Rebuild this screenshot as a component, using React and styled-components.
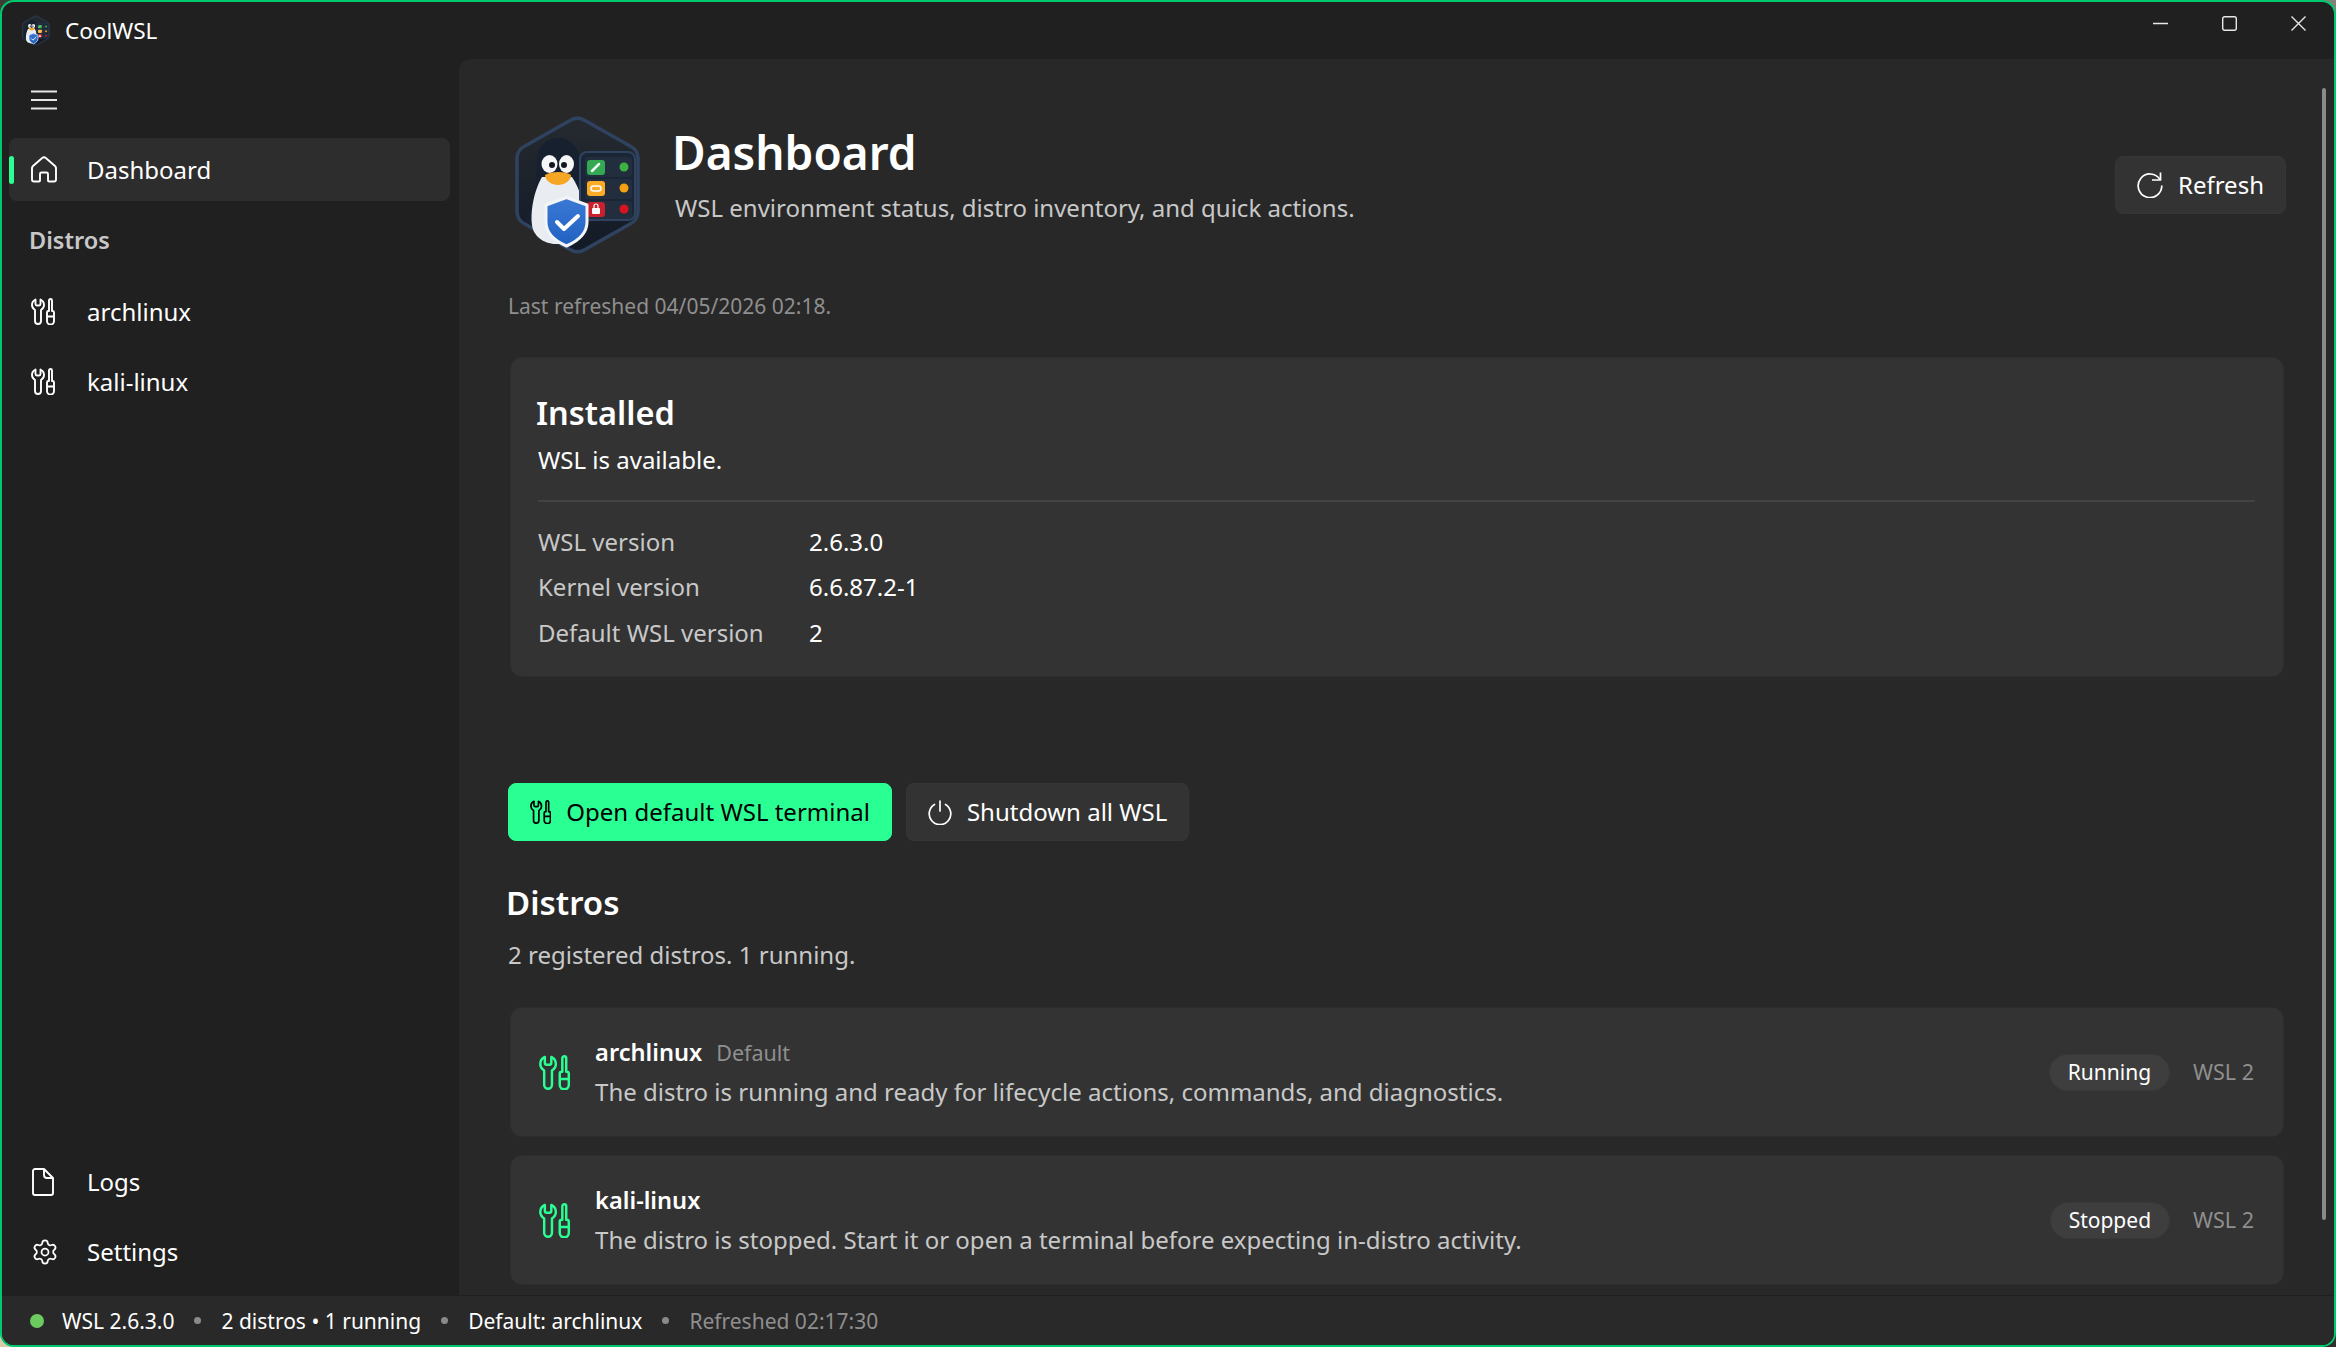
import React from 'react';
import styled, { createGlobalStyle } from 'styled-components';
import { Settings as GearIcon } from 'lucide-react';

const GlobalStyle = createGlobalStyle`
  html, body {
    margin: 0;
    padding: 0;
    height: 100%;
    overflow: hidden;
    background: linear-gradient(135deg, #3d3d38 0%, #e4dbb4 40%, #8a8a80 60%, #2e2e2e 100%);
  }
  * { box-sizing: border-box; }
`;

const Window = styled.div`
  width: 100vw;
  height: 100vh;
  display: flex;
  flex-direction: column;
  border: 2px solid #00c86e;
  border-radius: 14px;
  background: #202020;
  overflow: hidden;
  color: #fff;
  font-family: "Noto Sans", "Open Sans", sans-serif;
  font-size: 24px;
  line-height: 28px;
`;

const TitleBar = styled.header`
  height: 57px;
  flex: none;
  display: flex;
  align-items: center;
  padding: 0 28px 0 20px;
`;

const AppName = styled.span`
  margin-left: 15px;
  font-size: 22.5px;
`;

const WindowControls = styled.div`
  margin-left: auto;
  align-self: flex-start;
  margin-top: 14px;
  display: flex;
  gap: 54px;
  align-items: center;
`;

const Body = styled.div`
  flex: 1;
  min-height: 0;
  display: flex;
`;

const Sidebar = styled.aside`
  width: 457px;
  flex: none;
  display: flex;
  flex-direction: column;
  padding: 0 9px 11px 7px;
`;

const MenuButton = styled.div`
  height: 22px;
  margin: 30px 0 27px 22px;
  display: flex;
  align-items: center;
`;

const NavItem = styled.div`
  position: relative;
  height: 63px;
  flex: none;
  display: flex;
  align-items: center;
  padding-left: 22px;
  border-radius: 8px;
  background: ${(p) => (p.$active ? '#2d2d2d' : 'transparent')};
  margin-bottom: ${(p) => p.$gap || 7}px;
`;

const ActiveBar = styled.span`
  position: absolute;
  left: 0;
  top: 18px;
  width: 5px;
  height: 28px;
  border-radius: 3px;
  background: #2aff94;
`;

const NavIconSlot = styled.span`
  width: 56px;
  flex: none;
  display: flex;
  align-items: center;
`;

const NavGroupTitle = styled.div`
  height: 28px;
  margin: 18px 0 26px 20px;
  font-weight: 600;
  color: #c8c8c8;
  font-size: 23.5px;
`;

const SidebarFooter = styled.div`
  margin-top: auto;
`;

const Main = styled.main`
  flex: 1;
  min-width: 0;
  position: relative;
  background: #282828;
  border-top-left-radius: 12px;
  padding: 55px 48px 0 49px;
  overflow: hidden;
`;

const ScrollThumb = styled.div`
  position: absolute;
  top: 29px;
  right: 8px;
  width: 4px;
  height: 1132px;
  border-radius: 2px;
  background: #8a8a8a;
`;

const PageHeader = styled.section`
  display: flex;
  align-items: center;
  padding-left: 6px;
`;

const HeaderText = styled.div`
  flex: 1;
  margin-left: 30px;
  align-self: flex-start;
  padding-top: 10px;
`;

const PageTitle = styled.h1`
  margin: 0;
  font-size: 46px;
  line-height: 56px;
  font-weight: 600;
`;

const PageSubtitle = styled.p`
  margin: 14px 0 0 3px;
  color: #c8c8c8;
`;

const LastRefreshed = styled.p`
  margin: 38px 0 39px;
  font-size: 21px;
  line-height: 24px;
  color: #8f8f8f;
`;

const Button = styled.button`
  height: 58px;
  display: inline-flex;
  align-items: center;
  gap: 15px;
  padding: 0 21px;
  border: 1px solid ${(p) => (p.$accent ? '#2aff94' : '#363636')};
  border-radius: 8px;
  background: ${(p) => (p.$accent ? '#2aff94' : '#333333')};
  color: ${(p) => (p.$accent ? '#000000' : '#ffffff')};
  font: inherit;
`;

const Card = styled.section`
  margin: 0 2px;
  background: #333333;
  border: 1px solid #2e2e2e;
  border-radius: 12px;
`;

const StatusCard = styled(Card)`
  height: 320px;
  padding: 35px 28px 0 25px;
`;

const SectionTitle = styled.h2`
  margin: 0;
  font-size: 32.5px;
  line-height: 40px;
  font-weight: 600;
`;

const StatusText = styled.p`
  margin: 13px 0 0 2px;
`;

const Divider = styled.hr`
  margin: 26px 0 17px 2px;
  border: 0;
  height: 2px;
  background: #434343;
`;

const InfoGrid = styled.dl`
  margin: 0 0 0 2px;
  display: grid;
  grid-template-columns: 271px 1fr;
  grid-auto-rows: 45.5px;
  align-items: center;
`;

const InfoLabel = styled.dt`
  color: #c8c8c8;
`;

const InfoValue = styled.dd`
  margin: 0;
`;

const ActionRow = styled.div`
  margin-top: 106px;
  display: flex;
  gap: 14px;
`;

const DistrosTitle = styled(SectionTitle)`
  margin: 42px 0 0 -2px;
  font-size: 33px;
`;

const DistrosSummary = styled.p`
  margin: 18px 0 38px;
  color: #c8c8c8;
`;

const DistroList = styled.div`
  display: flex;
  flex-direction: column;
  gap: 18px;
`;

const DistroCard = styled(Card)`
  height: 130px;
  display: flex;
  align-items: center;
  padding: 0 29px 0 28px;
  color: #2aff94;
`;

const DistroInfo = styled.div`
  flex: 1;
  margin-left: 25px;
`;

const DistroHead = styled.div`
  display: flex;
  align-items: baseline;
  gap: 14px;
  height: 30px;
  margin-bottom: 10px;
  color: #fff;
`;

const DistroName = styled.strong`
  font-weight: 600;
  font-size: 23.6px;
`;

const DefaultTag = styled.span`
  font-size: 21.5px;
  color: #8f8f8f;
`;

const DistroText = styled.p`
  margin: 0;
  color: #c8c8c8;
`;

const Chip = styled.span`
  height: 37px;
  display: flex;
  align-items: center;
  padding: 0 18px;
  border: 1px solid #393939;
  border-radius: 19px;
  background: #3e3e3e;
  color: #fff;
  font-size: 21px;
`;

const WslTag = styled.span`
  margin-left: 23px;
  font-size: 21.5px;
  color: #8f8f8f;
`;

const StatusBar = styled.footer`
  height: 50px;
  flex: none;
  display: flex;
  align-items: center;
  padding-left: 28px;
  background: #292929;
  border-top: 1px solid #1f1f1f;
  font-size: 21px;
`;

const StatusDot = styled.span`
  width: 14px;
  height: 14px;
  margin-right: 18px;
  border-radius: 50%;
  background: #6ccb5f;
`;

const StatusSep = styled.span`
  width: 7px;
  height: 7px;
  margin: 0 20px;
  border-radius: 50%;
  background: #8a8a8a;
`;

const StatusMuted = styled.span`
  color: #8f8f8f;
`;

const ToolsIcon = ({ size = 27 }) => (
  <svg width={(size * 24) / 27} height={size} viewBox="0 0 24 27" fill="none" stroke="currentColor" strokeWidth="1.9" strokeLinejoin="round">
    <path d="M4.5 1.5C2.5 2.5 1 4.5 1 7c0 2.5 1.5 4 3 5v11a3 3 0 0 0 6 0V12c1.500-1 3-2.500 3-5 0-2.500-1.500-4.500-3.500-5.500V6A1.500 1.500 0 0 1 8 7.500H6A1.500 1.500 0 0 1 4.500 6Z" />
    <path d="M18 2.500a1.500 1.500 0 0 1 3 0V13h.5a1.500 1.500 0 0 1 1.500 1.500V23a3.500 3.500 0 0 1-7 0v-8.500a1.500 1.500 0 0 1 1.500-1.500H18ZM16 18.500h7" />
  </svg>
);

const HomeIcon = () => (
  <svg width="26" height="27" viewBox="0 0 26 27" fill="none" stroke="currentColor" strokeWidth="1.9">
    <path d="M11.200 2 2 10a3 3 0 0 0-1 2.300V23.500a2 2 0 0 0 2 2h5a1 1 0 0 0 1-1V18a1.500 1.500 0 0 1 1.500-1.500h5A1.500 1.500 0 0 1 17 18v6.500a1 1 0 0 0 1 1h5a2 2 0 0 0 2-2V12.300a3 3 0 0 0-1-2.300L14.800 2a2.700 2.700 0 0 0-3.600 0Z" />
  </svg>
);

const MenuIcon = () => (
  <svg width="26" height="20" viewBox="0 0 26 20" stroke="#e6e6e6" strokeWidth="1.8">
    <path d="M0 1.500h26M0 10h26M0 18.500h26" />
  </svg>
);

const FileIcon = () => (
  <svg width="24" height="28" viewBox="0 0 24 28" fill="none" stroke="currentColor" strokeWidth="1.9" strokeLinejoin="round">
    <path d="M4 1h9l9 9v15a2 2 0 0 1-2 2H4a2 2 0 0 1-2-2V3a2 2 0 0 1 2-2Z" />
    <path d="M13 1v6a3 3 0 0 0 3 3h6" />
  </svg>
);

const RefreshIcon = () => (
  <svg width="26" height="26" viewBox="0 0 26 26" fill="none" stroke="currentColor" strokeWidth="1.7">
    <path d="M23 7.500A11.800 11.800 0 1 0 24.800 13.500" />
    <path d="M23.500 0.500V8H15" />
  </svg>
);

const PowerIcon = () => (
  <svg width="24" height="25" viewBox="0 0 24 25" fill="none" stroke="currentColor" strokeWidth="1.7" strokeLinecap="round">
    <path d="M12 1v10M6.500 4.500a10.800 10.800 0 1 0 11 0" />
  </svg>
);

const MinimizeIcon = () => (
  <svg width="15" height="15" viewBox="0 0 15 15" stroke="#e8e8e8" strokeWidth="1.400">
    <path d="M0 7.500h15" />
  </svg>
);

const MaximizeIcon = () => (
  <svg width="15" height="15" viewBox="0 0 15 15" fill="none" stroke="#e8e8e8" strokeWidth="1.400">
    <rect x="0.700" y="0.700" width="13.600" height="13.600" rx="2" />
  </svg>
);

const CloseIcon = () => (
  <svg width="15" height="15" viewBox="0 0 15 15" stroke="#e8e8e8" strokeWidth="1.400">
    <path d="M0.500 0.500l14 14M14.500 0.500l-14 14" />
  </svg>
);

// hand drawn version of the app logo: hexagon, penguin, status panel, shield
const Logo = ({ width = 128 }) => (
  <svg width={width} height={(width * 142) / 128} viewBox="24 14 128 142">
    <defs>
      <linearGradient id="hexFill" x1="0" y1="0" x2="0" y2="1">
        <stop offset="0" stopColor="#262a30" />
        <stop offset="1" stopColor="#121a26" />
      </linearGradient>
      <linearGradient id="shieldFill" x1="0" y1="0" x2="0" y2="1">
        <stop offset="0" stopColor="#3a7ad6" />
        <stop offset="1" stopColor="#2260c0" />
      </linearGradient>
    </defs>
    <path
      d="M80 20.500a14 14 0 0 1 15 0L140 46a14 14 0 0 1 8 12v54a14 14 0 0 1-8 12L95 149.500a14 14 0 0 1-15 0L35 124a14 14 0 0 1-8-12V58a14 14 0 0 1 8-12Z"
      fill="url(#hexFill)"
      stroke="#2f4360"
      strokeWidth="3.500"
    />
    <path d="M47 62c0-15 9-24 21-24s22 9 22 24l2 72-24 10-34-24c6-12 12-26 13-58Z" fill="#17202e" />
    <path d="M42 125c-2-18 4-38 10-48h30c8 12 14 30 12 48-2 10-16 19-28 19-13 0-23-9-24-19Z" fill="#e9edf1" />
    <ellipse cx="59.500" cy="64" rx="8" ry="9" fill="#f4f6f8" />
    <ellipse cx="76.500" cy="64" rx="7.500" ry="9" fill="#f4f6f8" />
    <circle cx="62" cy="65" r="3" fill="#121822" />
    <circle cx="74" cy="65" r="3" fill="#121822" />
    <path d="M55 75c6-4 21-4 26 0 0 6-7 10-13 10s-13-4-13-10Z" fill="#f5a623" />
    <rect x="90" y="52" width="55" height="68" rx="7" fill="#1a2636" stroke="#2f4360" strokeWidth="2" />
    <rect x="95" y="57" width="47" height="20" rx="3" fill="#222e3e" />
    <rect x="95" y="79" width="47" height="20" rx="3" fill="#222e3e" />
    <rect x="95" y="101" width="47" height="18" rx="3" fill="#222e3e" />
    <rect x="97" y="60" width="18" height="15" rx="3" fill="#34a853" />
    <path d="M102 71l7-7" stroke="#f2f6f2" strokeWidth="2.500" strokeLinecap="round" />
    <rect x="97" y="81" width="18" height="15" rx="3" fill="#fbab25" />
    <rect x="101" y="86" width="10" height="5" rx="2.500" fill="#fbab25" stroke="#fff" strokeWidth="1.500" />
    <rect x="97" y="102" width="18" height="15" rx="3" fill="#c8202c" />
    <rect x="102" y="108" width="8" height="6" rx="1" fill="#fff" />
    <path d="M104 108v-2a2 2 0 0 1 4 0v2" fill="none" stroke="#fff" strokeWidth="1.200" />
    <circle cx="134" cy="67" r="4.500" fill="#3cb043" />
    <circle cx="134" cy="88" r="4.500" fill="#f5a010" />
    <circle cx="134" cy="109" r="4.500" fill="#d8141e" />
    <path d="M76.500 97.500 97 105v17c0 11-9 19-20.500 24C65 141 56 133 56 122v-17Z" fill="url(#shieldFill)" stroke="#f2f4f7" strokeWidth="3" strokeLinejoin="round" />
    <path d="M67 122l7 7 14-13" fill="none" stroke="#fff" strokeWidth="4" strokeLinecap="round" strokeLinejoin="round" />
  </svg>
);

const distros = [
  { name: 'archlinux', isDefault: true, state: 'Running', text: 'The distro is running and ready for lifecycle actions, commands, and diagnostics.' },
  { name: 'kali-linux', state: 'Stopped', text: 'The distro is stopped. Start it or open a terminal before expecting in-distro activity.' },
];

const info = [
  ['WSL version', '2.6.3.0'],
  ['Kernel version', '6.6.87.2-1'],
  ['Default WSL version', '2'],
];

export default function App() {
  return (
    <>
      <GlobalStyle />
      <Window>
        <TitleBar>
          <Logo width={28} />
          <AppName>CoolWSL</AppName>
          <WindowControls>
            <MinimizeIcon />
            <MaximizeIcon />
            <CloseIcon />
          </WindowControls>
        </TitleBar>
        <Body>
          <Sidebar>
            <MenuButton><MenuIcon /></MenuButton>
            <NavItem $active>
              <ActiveBar />
              <NavIconSlot><HomeIcon /></NavIconSlot>
              Dashboard
            </NavItem>
            <NavGroupTitle>Distros</NavGroupTitle>
            {distros.map((d) => (
              <NavItem key={d.name}>
                <NavIconSlot><ToolsIcon /></NavIconSlot>
                {d.name}
              </NavItem>
            ))}
            <SidebarFooter>
              <NavItem>
                <NavIconSlot><FileIcon /></NavIconSlot>
                Logs
              </NavItem>
              <NavItem $gap={1}>
                <NavIconSlot><GearIcon size={28} strokeWidth={1.5} /></NavIconSlot>
                Settings
              </NavItem>
            </SidebarFooter>
          </Sidebar>
          <Main>
            <ScrollThumb />
            <PageHeader>
              <Logo />
              <HeaderText>
                <PageTitle>Dashboard</PageTitle>
                <PageSubtitle>WSL environment status, distro inventory, and quick actions.</PageSubtitle>
              </HeaderText>
              <Button><RefreshIcon />Refresh</Button>
            </PageHeader>
            <LastRefreshed>Last refreshed 04/05/2026 02:18.</LastRefreshed>
            <StatusCard>
              <SectionTitle>Installed</SectionTitle>
              <StatusText>WSL is available.</StatusText>
              <Divider />
              <InfoGrid>
                {info.map(([label, value]) => (
                  <React.Fragment key={label}>
                    <InfoLabel>{label}</InfoLabel>
                    <InfoValue>{value}</InfoValue>
                  </React.Fragment>
                ))}
              </InfoGrid>
            </StatusCard>
            <ActionRow>
              <Button $accent><ToolsIcon size={24} />Open default WSL terminal</Button>
              <Button><PowerIcon />Shutdown all WSL</Button>
            </ActionRow>
            <DistrosTitle>Distros</DistrosTitle>
            <DistrosSummary>2 registered distros. 1 running.</DistrosSummary>
            <DistroList>
              {distros.map((d) => (
                <DistroCard key={d.name}>
                  <ToolsIcon size={35} />
                  <DistroInfo>
                    <DistroHead>
                      <DistroName>{d.name}</DistroName>
                      {d.isDefault && <DefaultTag>Default</DefaultTag>}
                    </DistroHead>
                    <DistroText>{d.text}</DistroText>
                  </DistroInfo>
                  <Chip>{d.state}</Chip>
                  <WslTag>WSL 2</WslTag>
                </DistroCard>
              ))}
            </DistroList>
          </Main>
        </Body>
        <StatusBar>
          <StatusDot />
          WSL 2.6.3.0
          <StatusSep />
          2 distros • 1 running
          <StatusSep />
          Default: archlinux
          <StatusSep />
          <StatusMuted>Refreshed 02:17:30</StatusMuted>
        </StatusBar>
      </Window>
    </>
  );
}
